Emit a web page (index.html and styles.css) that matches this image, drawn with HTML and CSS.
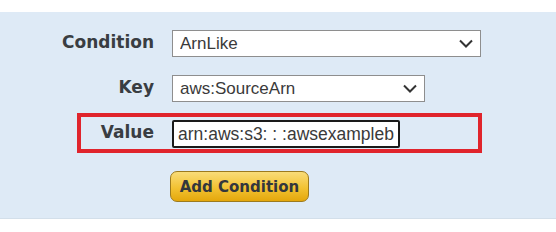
FILE: index.html
```html
<!DOCTYPE html>
<html lang="en">
<head>
  <meta charset="UTF-8" />
  <title>Add Condition</title>
  <link rel="stylesheet" href="styles.css">
</head>
<body>
  <div class="panel">

    <div class="row">
      <label class="label">Condition</label>
      <div class="select-wrap wide">
        <select class="select"><option>ArnLike</option></select>
        <svg class="chevron" width="14" height="9" viewBox="0 0 14 9"><path d="M1 1.5 L7 7.5 L13 1.5" fill="none" stroke="#333" stroke-width="2"/></svg>
      </div>
    </div>

    <div class="row key-row">
      <label class="label">Key</label>
      <div class="select-wrap narrow">
        <select class="select"><option>aws:SourceArn</option></select>
        <svg class="chevron" width="14" height="9" viewBox="0 0 14 9"><path d="M1 1.5 L7 7.5 L13 1.5" fill="none" stroke="#333" stroke-width="2"/></svg>
      </div>
    </div>

    <!-- highlighted value row -->
    <div class="row highlight">
      <label class="label">Value</label>
      <input class="value-input" type="text" value="arn:aws:s3: : :awsexampleb" />
    </div>

    <div class="row actions">
      <button class="add-button">Add Condition</button>
    </div>

  </div>
</body>
</html>
```

FILE: styles.css
```css
body {
  margin: 0;
  background: #ffffff;
  font-family: "Liberation Sans", Arial, sans-serif;
}

.panel {
  margin-top: 12px;
  height: 207px;
  box-sizing: border-box;
  padding-top: 18px;
  background-color: #deeaf6;
  border-bottom: 1px solid #d3dfea;
}

.row {
  display: flex;
  align-items: center;
  margin-bottom: 18px;
}

.key-row {
  margin-bottom: 11px;
}

.label {
  width: 154px;
  margin-right: 18px;
  text-align: right;
  font-family: "DejaVu Sans", Verdana, sans-serif;
  font-weight: bold;
  font-size: 17px;
  color: #393d42;
  position: relative;
  top: -2px;
}

.select-wrap {
  position: relative;
  height: 27px;
}

.wide { width: 309px; }
.narrow { width: 253px; }

.select {
  appearance: none;
  -webkit-appearance: none;
  width: 100%;
  height: 27px;
  margin: 0;
  padding: 0 30px 0 7px;
  border: 1px solid #8e8e8e;
  border-radius: 0;
  background: #ffffff;
  font-family: "Liberation Sans", Arial, sans-serif;
  font-size: 17px;
  color: #3a3a3a;
}

.chevron {
  position: absolute;
  right: 8px;
  top: 9px;
}

/* red box round the value row */
.highlight {
  margin-left: 77px;
  width: 405px;
  box-sizing: border-box;
  border: 4px solid #e0242c;
  padding: 3px 0 1px 0;
}

.highlight .label {
  width: 73px;
}

.value-input {
  width: 228px;
  height: 28px;
  box-sizing: border-box;
  margin: 0;
  padding: 0 4px;
  border: 2px solid #1a1a1a;
  border-radius: 2px;
  font-family: "Liberation Sans", Arial, sans-serif;
  font-size: 17.5px;
  color: #3a3a3a;
  outline: none;
}

.actions {
  padding-left: 170px;
}

.add-button {
  width: 139px;
  height: 31px;
  padding: 0;
  border: 1px solid #9c7a1e;
  border-radius: 7px;
  background: linear-gradient(#f9dc79, #f2c232 55%, #e4a70c);
  font-family: "DejaVu Sans", Verdana, sans-serif;
  font-weight: bold;
  font-size: 15px;
  color: #33373d;
  cursor: pointer;
}
```
